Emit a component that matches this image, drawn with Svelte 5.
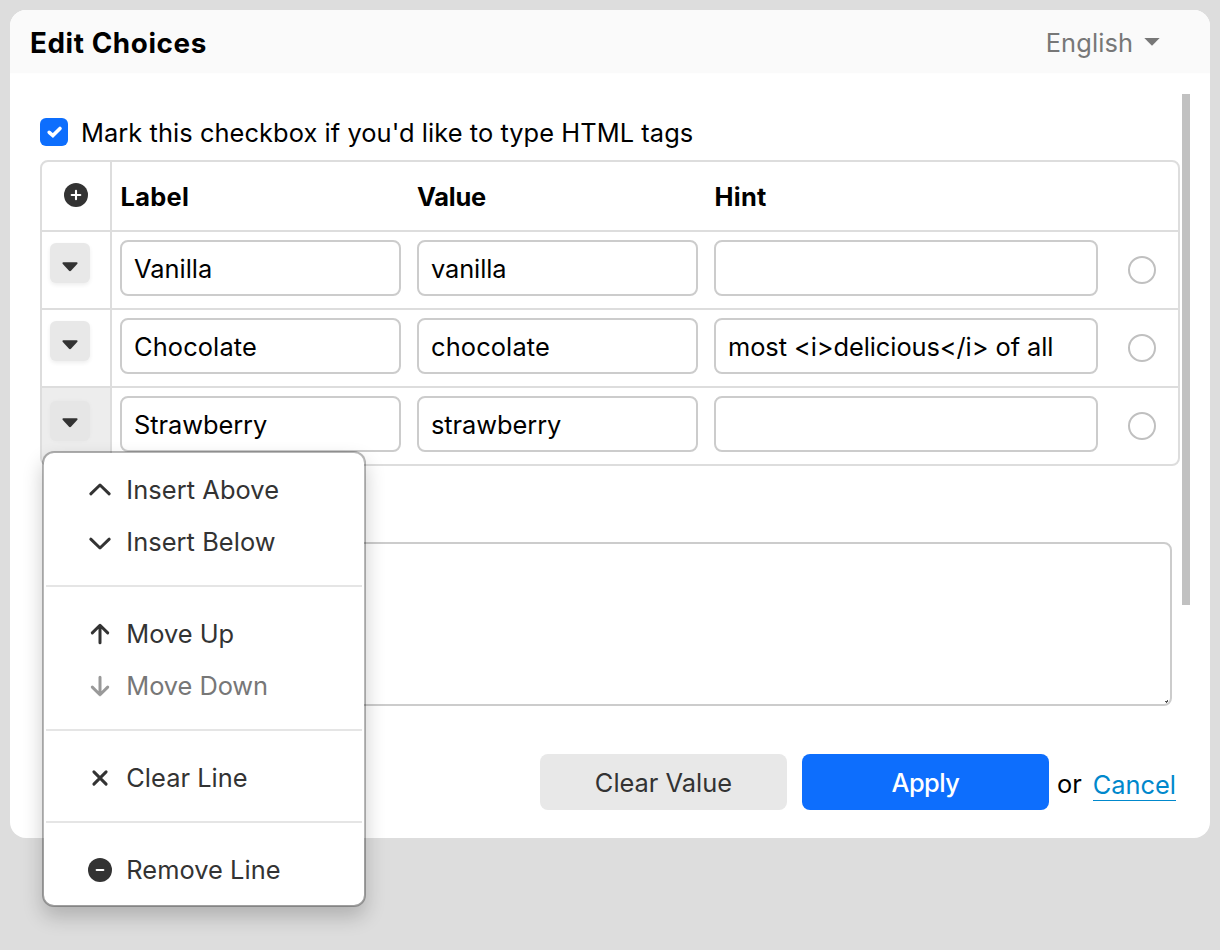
<script>
  let useHtml = $state(true);
  let rows = $state([
    { label: 'Vanilla', value: 'vanilla', hint: '', ls: [0, -0.1] },
    { label: 'Chocolate', value: 'chocolate', hint: 'most <i>delicious</i> of all', ls: [0.12, 0.13] },
    { label: 'Strawberry', value: 'strawberry', hint: '', ls: [-0.05, -0.06] }
  ]);
  const openRow = 2;
  const groups = [
    [
      { icon: 'up', text: 'Insert Above', ls: 0.08 },
      { icon: 'down', text: 'Insert Below', ls: 0.06 }
    ],
    [
      { icon: 'arrowUp', text: 'Move Up', ls: 0 },
      { icon: 'arrowDown', text: 'Move Down', ls: -0.06, disabled: true }
    ],
    [{ icon: 'clear', text: 'Clear Line', ls: 0.03 }],
    [{ icon: 'remove', text: 'Remove Line', ls: 0.05 }]
  ];
  const paths = {
    up: 'M4.800 17.800 L14 9 L23.200 17.800',
    down: 'M4.800 11.200 L14 20 L23.200 11.200',
    arrowUp: 'M14 22.700 V5.500 M6.300 12.900 L14 5.300 L21.700 12.900',
    arrowDown: 'M14 5.300 V22.500 M6.300 15.100 L14 22.700 L21.700 15.100',
    clear: 'M7.900 7.900 L20.100 20.100 M20.100 7.900 L7.900 20.100'
  };
</script>

<div class="dialog">
  <header>
    <h1>Edit Choices</h1>
    <button class="lang">English
      <svg width="16" height="8" viewBox="0 0 16 8"><path d="M0.300 0 H15.700 L8 7.800 Z" fill="#777" /></svg>
    </button>
  </header>

  <div class="content">
    <div class="main">
      <label class="check">
        <input type="checkbox" bind:checked={useHtml} />
        <span class="box">
          <svg width="28" height="28" viewBox="0 0 28 28"><path d="M9.200 14.300 L12.900 17.600 L20 10.500" fill="none" stroke="#fff" stroke-width="3.600" stroke-linecap="round" /></svg>
        </span>
        <span>Mark this checkbox if you'd like to type HTML tags</span>
      </label>

      <div class="table">
        <div class="row head">
          <div class="tool">
            <svg width="24" height="24" viewBox="0 0 24 24"><circle cx="12" cy="12" r="12" fill="#333" /><path d="M12 7.700 V16.300 M7.700 12 H16.300" stroke="#fff" stroke-width="2.100" stroke-linecap="round" /></svg>
          </div>
          <div class="th">Label</div>
          <div class="th value">Value</div>
          <div class="th">Hint</div>
        </div>
        {#each rows as row, i}
          <div class="row">
            <div class="tool" class:open={i === openRow}>
              <button class="drop" aria-label="Row menu">
                <svg width="16" height="10" viewBox="0 0 16 10"><path d="M1.400 0.300 H14.600 Q16.200 0.600 15.200 2 L9.200 8.600 Q8 9.700 6.800 8.600 L0.800 2 Q-0.200 0.600 1.400 0.300 Z" fill="#333" /></svg>
              </button>
            </div>
            <input class="field" bind:value={row.label} style:letter-spacing="{row.ls[0]}px" />
            <input class="field" bind:value={row.value} style:letter-spacing="{row.ls[1]}px" />
            <input class="field hint" bind:value={row.hint} />
            <span class="radio"></span>
          </div>
        {/each}
      </div>

      <div class="area"><svg width="4" height="4" viewBox="0 0 4 4"><path d="M0 1h1v1h-1zM1 2h1v1h-1zM2 0h1v1h-1zM2 1h1v1h-1zM1 1h1v1h-1z" fill="#555" /></svg></div>
    </div>
    <div class="scroll"><div class="thumb"></div></div>
  </div>

  <footer>
    <button class="btn">Clear Value</button>
    <button class="btn primary">Apply</button>
    <span class="or">or</span>
    <a href="#cancel">Cancel</a>
  </footer>
</div>

<div class="menu">
  {#each groups as group}
    <div class="group">
      {#each group as item}
        <button class="item" class:disabled={item.disabled}>
          <svg width="28" height="28" viewBox="0 0 28 28">
            {#if item.icon === 'remove'}
              <circle cx="14" cy="14" r="12" fill="currentColor" />
              <path d="M10.700 14 H17.300" stroke="#fff" stroke-width="2.200" stroke-linecap="round" />
            {:else}
              <path d={paths[item.icon]} fill="none" stroke="currentColor" stroke-width="3" stroke-linecap="round" stroke-linejoin="round" />
            {/if}
          </svg>
          <span style:letter-spacing="{item.ls}px">{item.text}</span>
        </button>
      {/each}
    </div>
  {/each}
</div>

<style>
  :global(body) { background: #ddd; height: 950px; overflow: hidden; }
  :global(#app) { padding: 10px; }
  .dialog, .dialog :global(*), .menu, .menu :global(*) { box-sizing: border-box; }
  .dialog, button, input { font-family: Inter, sans-serif; font-size: 25.4px; }
  button { border: 0; padding: 0; background: none; }
  svg { display: block; flex: none; }

  .dialog { width: 1200px; height: 828px; border-radius: 16px; background: #fff; color: #000; display: flex; flex-direction: column; overflow: hidden; }
  header { height: 64px; background: #fafafa; display: flex; align-items: center; justify-content: space-between; padding: 0 50px 0 20px; border-bottom: 1px solid #fefefe; }
  h1 { margin: 2px 0 0; font-size: 27.8px; font-weight: 700; letter-spacing: 0.6px; line-height: 32px; }
  .lang { display: flex; align-items: center; gap: 11px; color: #777; letter-spacing: 0.1px; padding-top: 2px; }
  .lang svg { margin-top: -2px; }

  .content { flex: 1; display: flex; }
  .main { width: 1140px; margin-left: 30px; padding-top: 44px; }
  .check { display: flex; align-items: center; height: 28px; gap: 13px; letter-spacing: 0.07px; line-height: 30px; }
  .check input { display: none; }
  .box { width: 28px; height: 28px; border-radius: 6px; background: #0d6efd; }
  .check span:last-child { margin-top: 2px; }

  .table { margin-top: 14px; height: 306px; border: 2px solid #ddd; border-radius: 8px; overflow: hidden; }
  .row { height: 78px; display: grid; grid-template-columns: 62px 281px 281px 384px 28px; column-gap: 16px; border-bottom: 2px solid #ddd; }
  .row:last-child { border-bottom: 0; }
  .head { height: 70px; }
  .tool { width: 70px; border-right: 2px solid #ddd; padding: 11px 0 0 8px; }
  .head .tool { padding: 21px 0 0 22px; }
  .tool.open { background: #ededed; padding-top: 13px; }
  .th { font-weight: 700; letter-spacing: 0.3px; line-height: 70px; padding-left: 0.5px; }
  .th.value { letter-spacing: -0.2px; padding-left: 0; }
  .drop { width: 40px; height: 40px; border-radius: 6px; background: #e8e8e8; display: flex; align-items: center; justify-content: center; padding-top: 8px; box-shadow: 0 2px 4px rgba(0, 0, 0, 0.07); }
  .open .drop { background: #e6e6e6; padding-top: 4px; box-shadow: 0 0 4px rgba(0, 0, 0, 0.03); }
  .field { margin-top: 8px; width: 100%; height: 56px; border: 2px solid #ccc; border-radius: 8px; padding: 0 12px; color: #000; outline: none; background: #fff; min-width: 0; }
  .hint { letter-spacing: -0.07px; }
  .radio { width: 28px; height: 28px; border: 2px solid #c0c0c0; border-radius: 50%; margin: 24px 0 0 14px; }
  .area { width: 1128px; height: 164px; margin: 76px 0 0 4px; border: 2px solid #ccc; border-radius: 8px; display: flex; align-items: flex-end; justify-content: flex-end; padding: 0 1px 0 0; }
  .scroll { margin-left: 2px; padding-top: 20px; }
  .thumb { width: 8px; height: 511px; background: #c1c1c1; }

  footer { height: 84px; display: flex; justify-content: flex-end; padding-right: 34px; }
  .btn { width: 247px; height: 56px; border-radius: 8px; background: #e8e8e8; color: #333; margin-right: 15px; }
  .primary { background: #0d6efd; color: #fff; margin-right: 8px; font-weight: 500; letter-spacing: -0.5px; }
  .or { line-height: 60px; letter-spacing: 0; }
  a { color: #0088cc; text-decoration: none; border-bottom: 1px solid #0088cc; height: 31px; line-height: 29px; margin: 16px 0 0 11px; }

  .menu { position: absolute; left: 42px; top: 451px; width: 324px; height: 456px; border: 2px solid rgba(0, 0, 0, 0.28); background: #fff; background-clip: padding-box; border-radius: 12px; box-shadow: 0 10px 20px rgba(0, 0, 0, 0.2); padding: 11px 2px 0; }
  .group { padding-bottom: 17px; }
  .group + .group { border-top: 2px solid #e5e5e5; padding-top: 21px; }
  .item { display: flex; align-items: center; width: 100%; height: 52px; padding-left: 40.3px; gap: 12px; color: #333; }
  .item span { margin-top: -2px; }
  .disabled { color: #777; }
  .disabled svg { color: #999; }
</style>
